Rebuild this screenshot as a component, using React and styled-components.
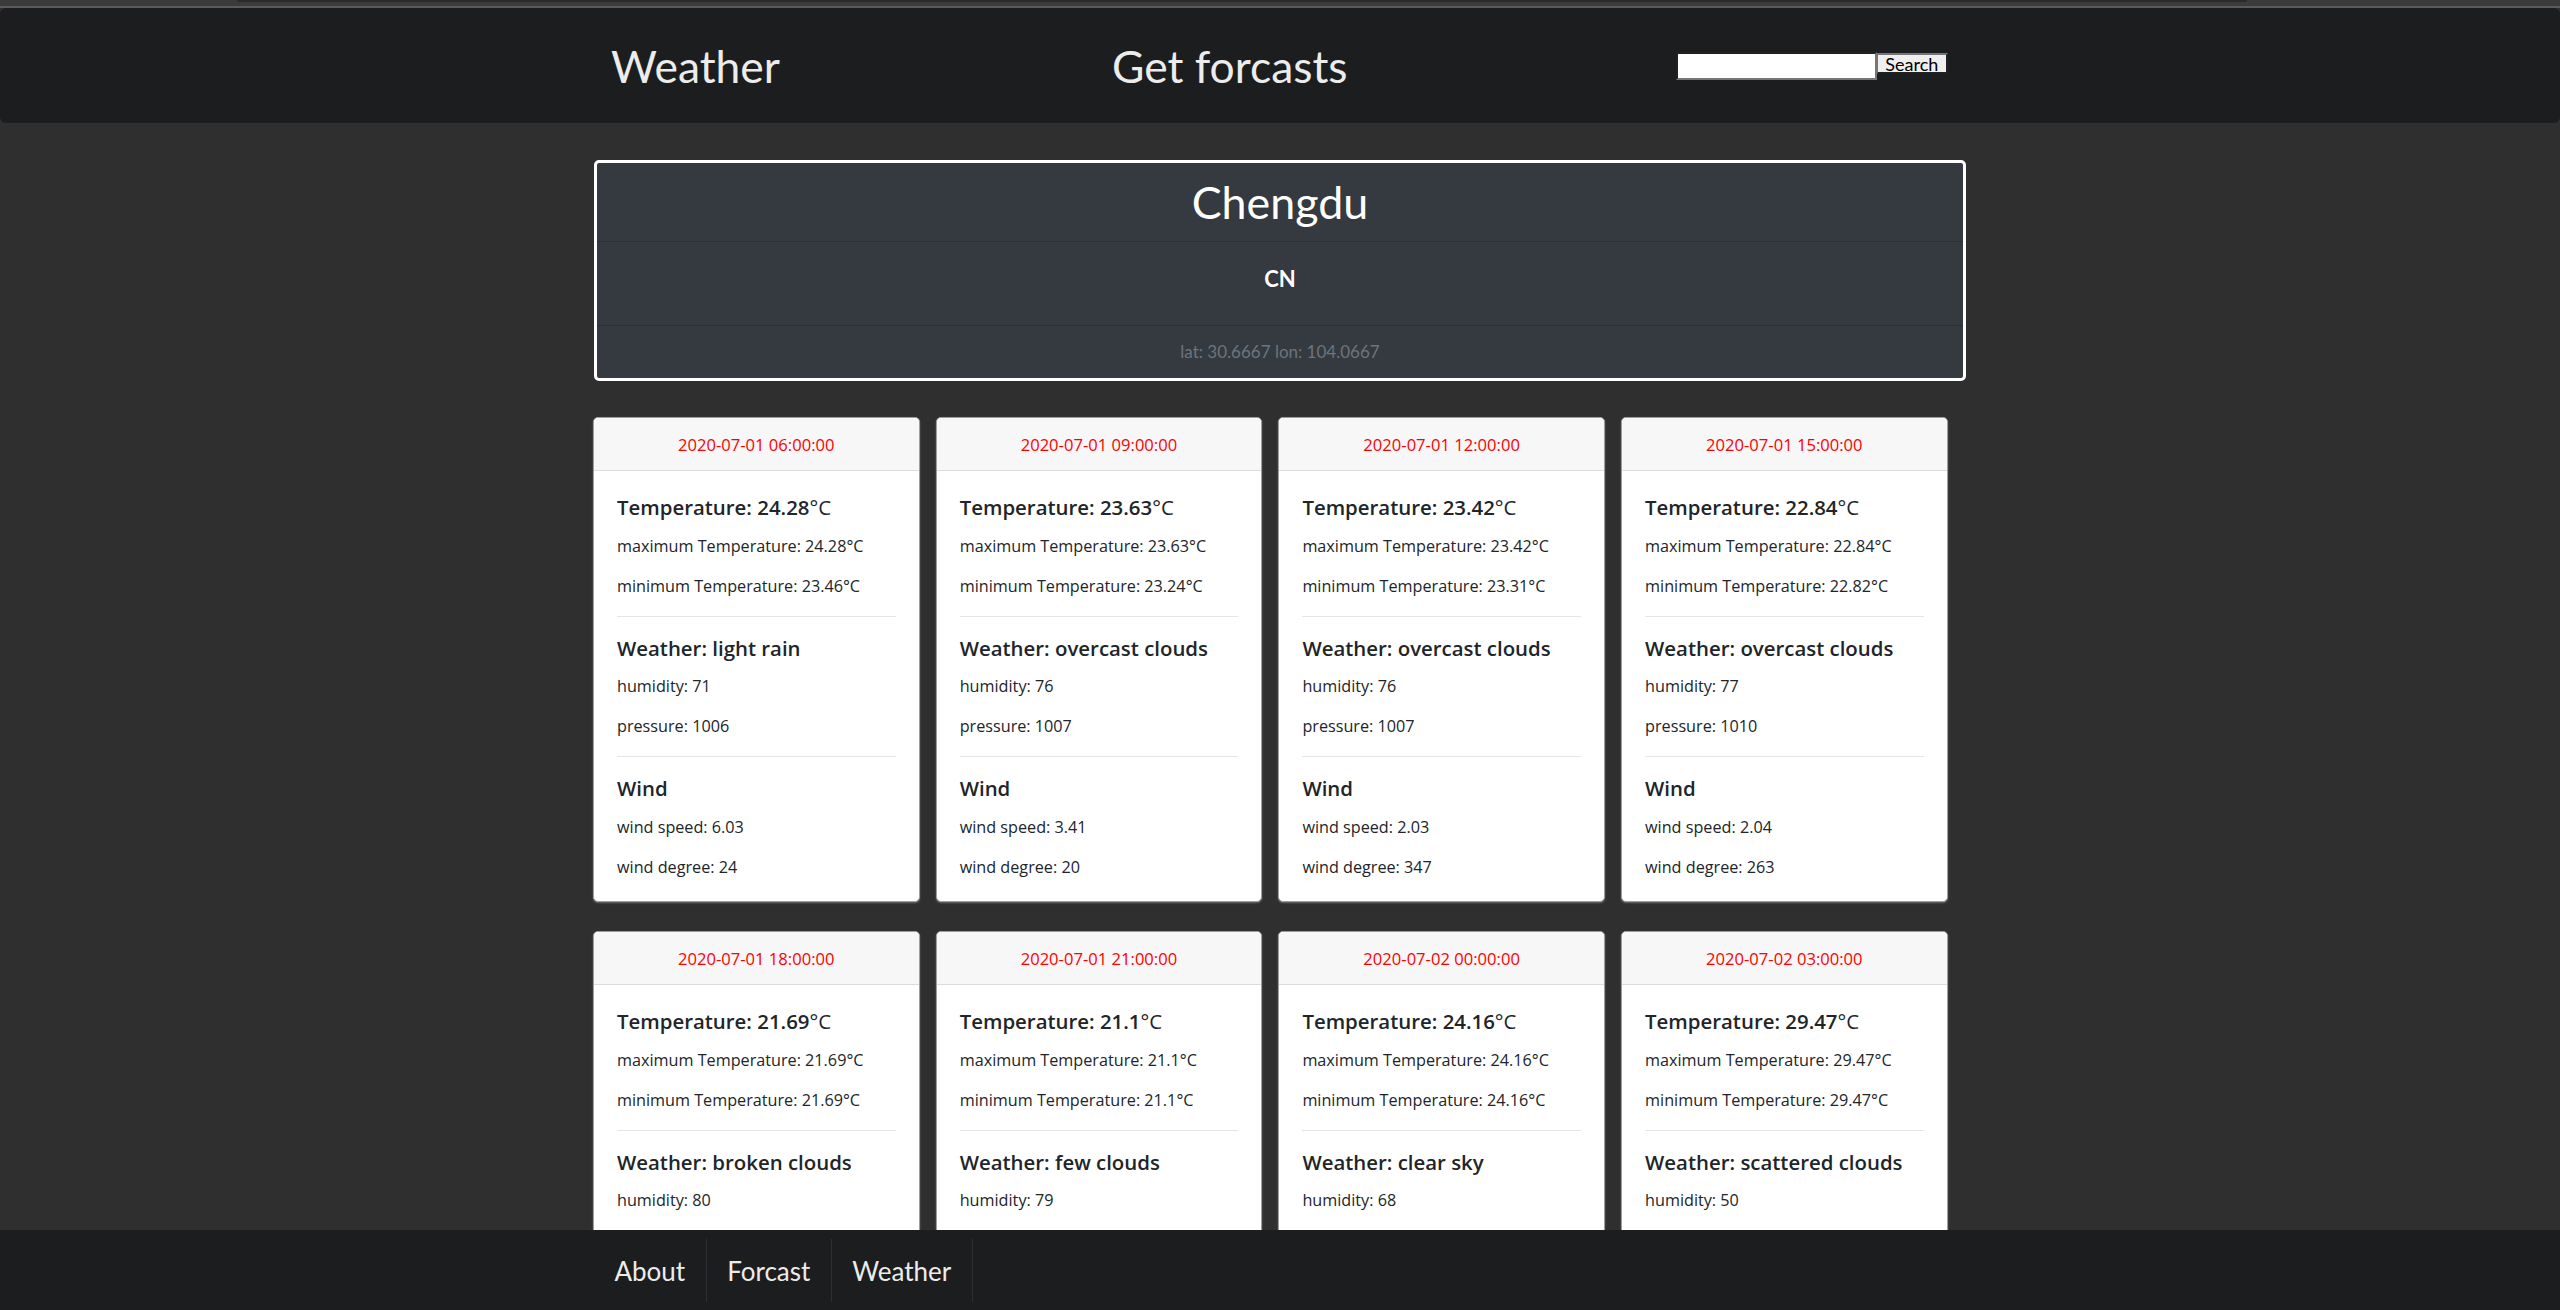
import React from 'react';
import styled, { createGlobalStyle } from 'styled-components';

const GlobalStyle = createGlobalStyle`
  * { box-sizing: border-box; }
  html {
    scrollbar-width: none;
    background: #2f2f2f;
  }
  html::-webkit-scrollbar { display: none; }
  body {
    margin: 0;
    padding: 0;
    background: #2f2f2f;
    font-family: Lato, "Liberation Sans", sans-serif;
  }
`;

const TopEdge = styled.div`
  height: 8px;
  background: #3b3b3b;
  border-bottom: 2px solid #5a5a5a;
`;

const TopEdgeBar = styled.div`
  margin-left: 237px;
  width: 2010px;
  height: 2px;
  background: #2a2a2a;
  border-radius: 0 0 2px 2px;
`;

const Header = styled.header`
  height: 115px;
  background: #1c1d1f;
  border-radius: 6px;
  display: flex;
  align-items: center;
`;

const HeaderInner = styled.div`
  width: 1374px;
  margin: 0 auto;
  padding-left: 18px;
  display: grid;
  grid-template-columns: 501px 564px auto;
  align-items: center;
`;

const HeaderTitle = styled.h1`
  margin: 0;
  font-family: Lato, "Liberation Sans", sans-serif;
  font-weight: 400;
  font-size: 44.4px;
  line-height: 1.2;
  color: #ececec;
  white-space: nowrap;
`;

const SearchForm = styled.form`
  display: flex;
  align-items: flex-start;
  height: 28px;
`;

const SearchInput = styled.input`
  width: 201px;
  height: 28px;
  margin: 0;
  padding: 1px 3px;
  border: 2px inset #767676;
  background: #fff;
  font-family: Lato, "Liberation Sans", sans-serif;
  font-size: 16px;
  outline: none;
`;

const SearchButton = styled.button`
  margin: 1.6px 0 0 0;
  width: 70.6px;
  height: 21.4px;
  padding: 0;
  background: #efefef;
  border: 2px outset #767676;
  border-left-width: 1px;
  color: #000;
  font-family: Lato, "Liberation Sans", sans-serif;
  font-size: 18px;
  line-height: 16px;
  cursor: pointer;
`;

const Main = styled.main`
  width: 1374px;
  margin: 37px auto 0;
  padding-bottom: 120px;
`;

const CityBox = styled.section`
  margin: 0 1px;
  border: 3px solid #ffffff;
  border-radius: 5px;
  background: #343a40;
  overflow: hidden;
  text-align: center;
  font-family: Lato, "Liberation Sans", sans-serif;
`;

const CityHead = styled.div`
  padding: 11.5px 0;
  border-bottom: 1px solid #2b3035;
`;

const CityName = styled.h1`
  margin: 0;
  font-size: 44.8px;
  line-height: 55px;
  font-weight: 400;
  color: #ffffff;
`;

const CityBody = styled.div`
  padding: 23px 0 32.5px;
  border-bottom: 1px solid #2b3035;
`;

const Country = styled.h5`
  margin: 0;
  font-size: 22px;
  line-height: 27.5px;
  font-weight: 700;
  color: #ffffff;
`;

const CityFoot = styled.div`
  padding: 13px 0;
  font-size: 17px;
  line-height: 25.5px;
  color: #6c757d;
`;

const CardGrid = styled.div`
  margin-top: 36.3px;
  display: grid;
  grid-template-columns: repeat(4, 326.5px);
  column-gap: 16.2px;
  row-gap: 29.3px;
`;

const Card = styled.article`
  background: #ffffff;
  border: 1px solid #9d9d9d;
  border-radius: 5px;
  overflow: hidden;
  box-shadow: 0 1px 2px rgba(150, 150, 150, 0.6);
  font-family: "Open Sans", "Noto Sans", "Liberation Sans", sans-serif;
  color: #212529;
`;

const CardHeader = styled.div`
  height: 53.6px;
  display: flex;
  align-items: center;
  justify-content: center;
  background: #f7f7f7;
  border-bottom: 1px solid #dcdcdc;
  color: #ff0000;
  font-size: 16.6px;
`;

const CardBody = styled.div`
  padding: 23px 23px 22px;
`;

const Title = styled.h5`
  margin: 0 0 12.4px;
  font-size: 20.4px;
  line-height: 27px;
  font-weight: 600;
  white-space: nowrap;
`;

const Unit = styled.span`
  font-weight: 400;
`;

const Line = styled.p`
  margin: 0;
  font-size: 16.2px;
  line-height: 24px;
  white-space: nowrap;
  & + & {
    margin-top: 16px;
  }
`;

const Divider = styled.hr`
  margin: 18px 0;
  border: 0;
  border-top: 1px solid #e5e5e5;
`;

const Footer = styled.footer`
  position: fixed;
  left: 0;
  right: 0;
  bottom: 0;
  height: 80px;
  background: #1c1d1f;
  padding: 9px 0 8px;
`;

const FooterNav = styled.nav`
  width: 1374px;
  height: 100%;
  margin: 0 auto;
  padding-left: 1px;
  display: flex;
`;

const FooterLink = styled.a`
  display: flex;
  align-items: center;
  padding: 0 20.5px;
  border-right: 1px solid #2e2f31;
  font-family: Lato, "Liberation Sans", sans-serif;
  font-size: 26px;
  color: #ececec;
  text-decoration: none;
`;

const forecasts = [
  { dt: '2020-07-01 06:00:00', temp: '24.28', max: '24.28', min: '23.46', desc: 'light rain', hum: 71, pres: 1006, speed: '6.03', deg: 24 },
  { dt: '2020-07-01 09:00:00', temp: '23.63', max: '23.63', min: '23.24', desc: 'overcast clouds', hum: 76, pres: 1007, speed: '3.41', deg: 20 },
  { dt: '2020-07-01 12:00:00', temp: '23.42', max: '23.42', min: '23.31', desc: 'overcast clouds', hum: 76, pres: 1007, speed: '2.03', deg: 347 },
  { dt: '2020-07-01 15:00:00', temp: '22.84', max: '22.84', min: '22.82', desc: 'overcast clouds', hum: 77, pres: 1010, speed: '2.04', deg: 263 },
  { dt: '2020-07-01 18:00:00', temp: '21.69', max: '21.69', min: '21.69', desc: 'broken clouds', hum: 80, pres: 1010, speed: '1.52', deg: 241 },
  { dt: '2020-07-01 21:00:00', temp: '21.1', max: '21.1', min: '21.1', desc: 'few clouds', hum: 79, pres: 1009, speed: '1.21', deg: 226 },
  { dt: '2020-07-02 00:00:00', temp: '24.16', max: '24.16', min: '24.16', desc: 'clear sky', hum: 68, pres: 1009, speed: '1.35', deg: 180 },
  { dt: '2020-07-02 03:00:00', temp: '29.47', max: '29.47', min: '29.47', desc: 'scattered clouds', hum: 50, pres: 1007, speed: '1.6', deg: 142 },
];

function ForecastCard({ f }) {
  return (
    <Card>
      <CardHeader>{f.dt}</CardHeader>
      <CardBody>
        <Title>
          Temperature: {f.temp}
          <Unit>°C</Unit>
        </Title>
        <Line>maximum Temperature: {f.max}°C</Line>
        <Line>minimum Temperature: {f.min}°C</Line>
        <Divider />
        <Title>Weather: {f.desc}</Title>
        <Line>humidity: {f.hum}</Line>
        <Line>pressure: {f.pres}</Line>
        <Divider />
        <Title>Wind</Title>
        <Line>wind speed: {f.speed}</Line>
        <Line>wind degree: {f.deg}</Line>
      </CardBody>
    </Card>
  );
}

export default function App() {
  return (
    <>
      <GlobalStyle />
      <TopEdge>
        <TopEdgeBar />
      </TopEdge>
      <Header>
        <HeaderInner>
          <HeaderTitle>Weather</HeaderTitle>
          <HeaderTitle>Get forcasts</HeaderTitle>
          <SearchForm onSubmit={(e) => e.preventDefault()}>
            <SearchInput type="text" />
            <SearchButton type="submit">Search</SearchButton>
          </SearchForm>
        </HeaderInner>
      </Header>
      <Main>
        <CityBox>
          <CityHead>
            <CityName>Chengdu</CityName>
          </CityHead>
          <CityBody>
            <Country>CN</Country>
          </CityBody>
          <CityFoot>lat: 30.6667 lon: 104.0667</CityFoot>
        </CityBox>
        <CardGrid>
          {forecasts.map((f) => (
            <ForecastCard key={f.dt} f={f} />
          ))}
        </CardGrid>
      </Main>
      <Footer>
        <FooterNav>
          <FooterLink href="#">About</FooterLink>
          <FooterLink href="#">Forcast</FooterLink>
          <FooterLink href="#">Weather</FooterLink>
        </FooterNav>
      </Footer>
    </>
  );
}
